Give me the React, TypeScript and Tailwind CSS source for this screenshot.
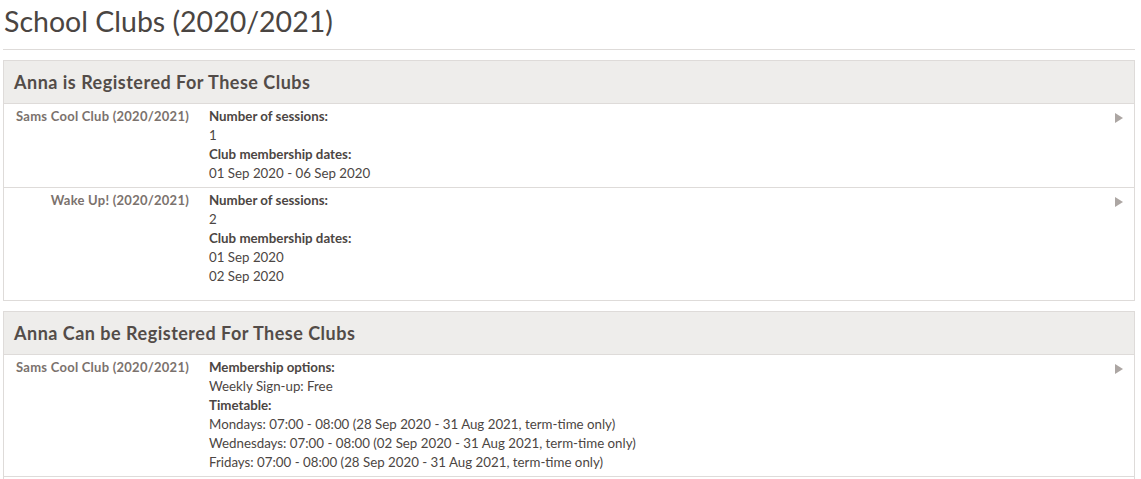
import React from 'react';

type Row = {
  label: string;
  lines: { text: string; bold?: boolean }[];
};

const registered: Row[] = [
  {
    label: 'Sams Cool Club (2020/2021)',
    lines: [
      { text: 'Number of sessions:', bold: true },
      { text: '1' },
      { text: 'Club membership dates:', bold: true },
      { text: '01 Sep 2020 - 06 Sep 2020' },
    ],
  },
  {
    label: 'Wake Up! (2020/2021)',
    lines: [
      { text: 'Number of sessions:', bold: true },
      { text: '2' },
      { text: 'Club membership dates:', bold: true },
      { text: '01 Sep 2020' },
      { text: '02 Sep 2020' },
    ],
  },
];

const available: Row[] = [
  {
    label: 'Sams Cool Club (2020/2021)',
    lines: [
      { text: 'Membership options:', bold: true },
      { text: 'Weekly Sign-up: Free' },
      { text: 'Timetable:', bold: true },
      { text: 'Mondays: 07:00 - 08:00 (28 Sep 2020 - 31 Aug 2021, term-time only)' },
      { text: 'Wednesdays: 07:00 - 08:00 (02 Sep 2020 - 31 Aug 2021, term-time only)' },
      { text: 'Fridays: 07:00 - 08:00 (28 Sep 2020 - 31 Aug 2021, term-time only)' },
    ],
  },
];

const Arrow = () => (
  <svg width="8" height="10" viewBox="0 0 8 10" className="block">
    <path d="M0 0 L8 5 L0 10 Z" fill="#aca6a3" />
  </svg>
);

const ClubRow = ({ row, first, last }: { row: Row; first: boolean; last?: boolean }) => (
  <div className={`flex ${first ? '' : 'border-t border-[#dedbd9]'} ${last ? 'border-b border-[#dedbd9]' : ''}`}>
    <div className="w-[195px] shrink-0 pr-[10px] pt-[3px] text-right text-[13px] leading-[19px] tracking-[0.25px] font-bold text-[#7b726d]">
      {row.label}
    </div>
    <div className="flex-1 pl-[10px] pt-[3px] pb-[4px] text-[13.3px] leading-[19px] text-[#4c4643]">
      {row.lines.map((l, i) => (
        <div key={i} className={l.bold ? 'font-bold' : ''}>{l.text}</div>
      ))}
    </div>
    <div className="pt-[9px] pr-[11px]">
      <Arrow />
    </div>
  </div>
);

const Panel = ({ title, rows, closed }: { title: string; rows: Row[]; closed?: boolean }) => (
  <div className="border border-[#dedbd9] pb-[10px]">
    <div className="h-[43px] flex items-center pl-[10px] bg-[#eeedeb] border-b border-[#dedbd9] text-[18px] tracking-[0.5px] font-bold text-[#534c48]">
      {title}
    </div>
    {rows.map((r, i) => (
      <ClubRow key={i} row={r} first={i === 0} last={!closed && i === rows.length - 1} />
    ))}
  </div>
);

export default function App() {
  return (
    <div className="min-h-screen bg-white pl-[3px] pr-[6px]" style={{ fontFamily: 'Lato, "Open Sans", sans-serif' }}>
      <h1 className="pl-[1px] pt-[2px] text-[28.5px] leading-[38px] font-normal text-[#4a4542]">School Clubs (2020/2021)</h1>
      <div className="mt-[9px] border-t border-[#dedbd9]" />
      <div className="mt-[10px]">
        <Panel title="Anna is Registered For These Clubs" rows={registered} closed />
      </div>
      <div className="mt-[10px]">
        <Panel title="Anna Can be Registered For These Clubs" rows={available} />
      </div>
    </div>
  );
}
